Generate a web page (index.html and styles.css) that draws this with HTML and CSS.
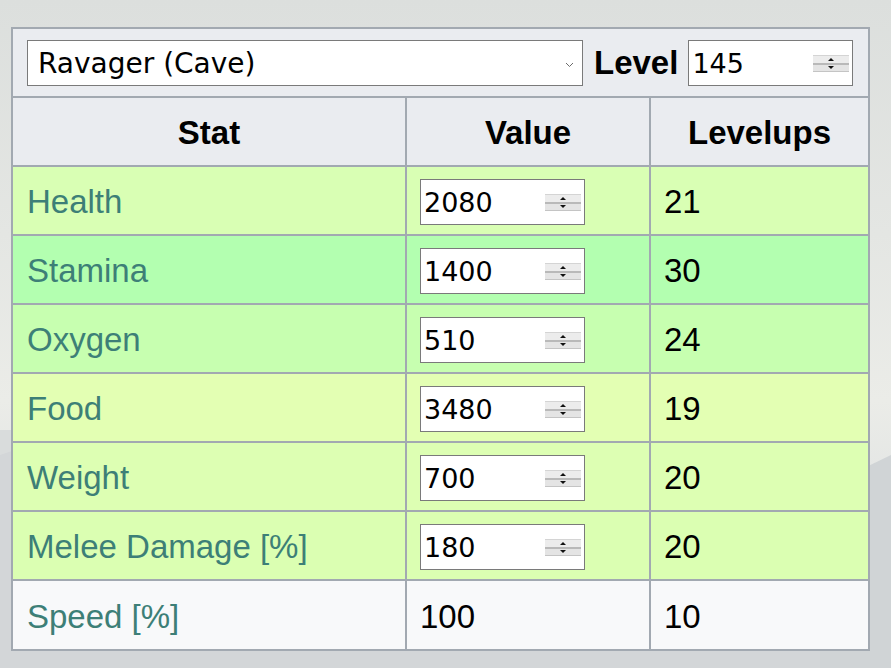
FILE: index.html
```html
<!DOCTYPE html>
<html lang="en">
<head>
<meta charset="utf-8">
<title>Ravager stats</title>
<link rel="stylesheet" href="styles.css">
</head>
<body>
<svg class="backdrop" width="891" height="668" viewBox="0 0 891 668" aria-hidden="true">
  <polygon points="0,470 40,440 80,455 120,430 0,430" fill="#d9dcdc"/>
  <polygon points="0,668 0,455 30,445 60,470 90,500 140,520 200,560 891,560 891,668" fill="#d3d6d8"/>
  <polygon points="820,520 860,470 891,455 891,668 820,668" fill="#d0d4d6"/>
</svg>
<main class="page">
  <table class="stats">
    <colgroup>
      <col class="c-stat">
      <col class="c-value">
      <col class="c-lvl">
    </colgroup>
    <tr class="toolbar">
      <td colspan="3">
        <div class="bar">
          <div class="select">
            <span class="select-text">Ravager (Cave)</span>
            <svg class="chev" width="9" height="6" viewBox="0 0 9 6"><polyline points="1,1 4.5,4.5 8,1" fill="none" stroke="#6b6b6b" stroke-width="1"/></svg>
          </div>
          <span class="level-label">Level</span>
          <div class="numbox level">
            <span class="num">145</span>
            <span class="spin"><i class="up"></i><i class="down"></i></span>
          </div>
        </div>
      </td>
    </tr>
    <tr class="head">
      <th>Stat</th>
      <th>Value</th>
      <th>Levelups</th>
    </tr>
    <tr class="r-health">
      <td class="name">Health</td>
      <td><div class="numbox"><span class="num">2080</span><span class="spin"><i class="up"></i><i class="down"></i></span></div></td>
      <td>21</td>
    </tr>
    <tr class="r-stamina">
      <td class="name">Stamina</td>
      <td><div class="numbox"><span class="num">1400</span><span class="spin"><i class="up"></i><i class="down"></i></span></div></td>
      <td>30</td>
    </tr>
    <tr class="r-oxygen">
      <td class="name">Oxygen</td>
      <td><div class="numbox"><span class="num">510</span><span class="spin"><i class="up"></i><i class="down"></i></span></div></td>
      <td>24</td>
    </tr>
    <tr class="r-food">
      <td class="name">Food</td>
      <td><div class="numbox"><span class="num">3480</span><span class="spin"><i class="up"></i><i class="down"></i></span></div></td>
      <td>19</td>
    </tr>
    <tr class="r-weight">
      <td class="name">Weight</td>
      <td><div class="numbox"><span class="num">700</span><span class="spin"><i class="up"></i><i class="down"></i></span></div></td>
      <td>20</td>
    </tr>
    <tr class="r-melee">
      <td class="name">Melee Damage [%]</td>
      <td><div class="numbox"><span class="num">180</span><span class="spin"><i class="up"></i><i class="down"></i></span></div></td>
      <td>20</td>
    </tr>
    <tr class="r-speed">
      <td class="name">Speed [%]</td>
      <td>100</td>
      <td>10</td>
    </tr>
  </table>
</main>
</body>
</html>
```

FILE: styles.css
```css
html, body {
  margin: 0;
  padding: 0;
}
body {
  width: 891px;
  height: 668px;
  overflow: hidden;
  background: linear-gradient(180deg, #dcdfdd 0%, #e4e6e3 35%, #ebece8 60%, #dfe2e2 80%, #d5d8da 100%);
  font-family: "Liberation Sans", Arial, sans-serif;
  position: relative;
}
.backdrop {
  position: absolute;
  left: 0;
  top: 0;
  z-index: 0;
}
.page {
  position: relative;
  z-index: 1;
  padding: 27px 0 0 11px;
}
.stats {
  border-collapse: collapse;
  table-layout: fixed;
  width: 857px;
  border: 2px solid #a2a9b1;
  font-size: 33px;
  color: #000;
}
.c-stat { width: 394px; }
.c-value { width: 244px; }
.c-lvl { width: 219px; }
.stats td, .stats th {
  border: 2px solid #a2a9b1;
  height: 69px;
  padding: 0 13px;
  vertical-align: middle;
  text-align: left;
  box-sizing: border-box;
}
.stats td {
  padding-top: 3px;
}
.stats td.name {
  padding-left: 14px;
}
.stats th {
  background: #eaecf0;
  font-weight: bold;
  text-align: center;
  padding-top: 2px;
}
.stats tr.r-speed td {
  height: 70px;
}
.toolbar td {
  background: #eaecf0;
  padding: 1px 13px 0 14px;
}
.bar {
  display: flex;
  align-items: center;
}
.select {
  width: 556px;
  height: 46px;
  box-sizing: border-box;
  border: 1px solid #7a7a7a;
  background: #fff;
  display: flex;
  align-items: center;
  padding: 1px 8px 0 10px;
}
.select-text {
  flex: 1;
  font-family: "DejaVu Sans", sans-serif;
  font-size: 28px;
  color: #000;
}
.chev {
  margin-top: 2px;
}
.level-label {
  font-weight: bold;
  font-size: 33px;
  margin: 0 10px 0 11px;
}
.numbox {
  width: 165px;
  height: 46px;
  box-sizing: border-box;
  border: 1px solid #7a7a7a;
  background: #fff;
  display: flex;
  align-items: center;
  padding: 1px 3px 0 3px;
}
.num {
  flex: 1;
  font-family: "DejaVu Sans", sans-serif;
  font-size: 27px;
  color: #000;
}
.spin {
  width: 36px;
  height: 17px;
  display: flex;
  flex-direction: column;
  background: #ececec;
  border-top: 1px solid #d4d4d4;
  border-bottom: 1px solid #c4c4c4;
  box-sizing: border-box;
}
.spin i {
  flex: 1;
  display: flex;
  align-items: center;
  justify-content: center;
}
.spin i.down {
  border-top: 2px solid #b9b9b9;
  background: #e4e4e4;
}
.spin i.up::before {
  content: "";
  border-left: 3px solid transparent;
  border-right: 3px solid transparent;
  border-bottom: 3px solid #111;
}
.spin i.down::before {
  content: "";
  border-left: 3px solid transparent;
  border-right: 3px solid transparent;
  border-top: 3px solid #111;
}
.name {
  color: #3d7f77;
}
.r-health td { background: #d9ffb4; }
.r-stamina td { background: #b3ffb0; }
.r-oxygen td { background: #c7ffb0; }
.r-food td { background: #e3ffb3; }
.r-weight td { background: #ddffb3; }
.r-melee td { background: #dbffb2; }
.r-speed td { background: #f8f9fa; }
```
